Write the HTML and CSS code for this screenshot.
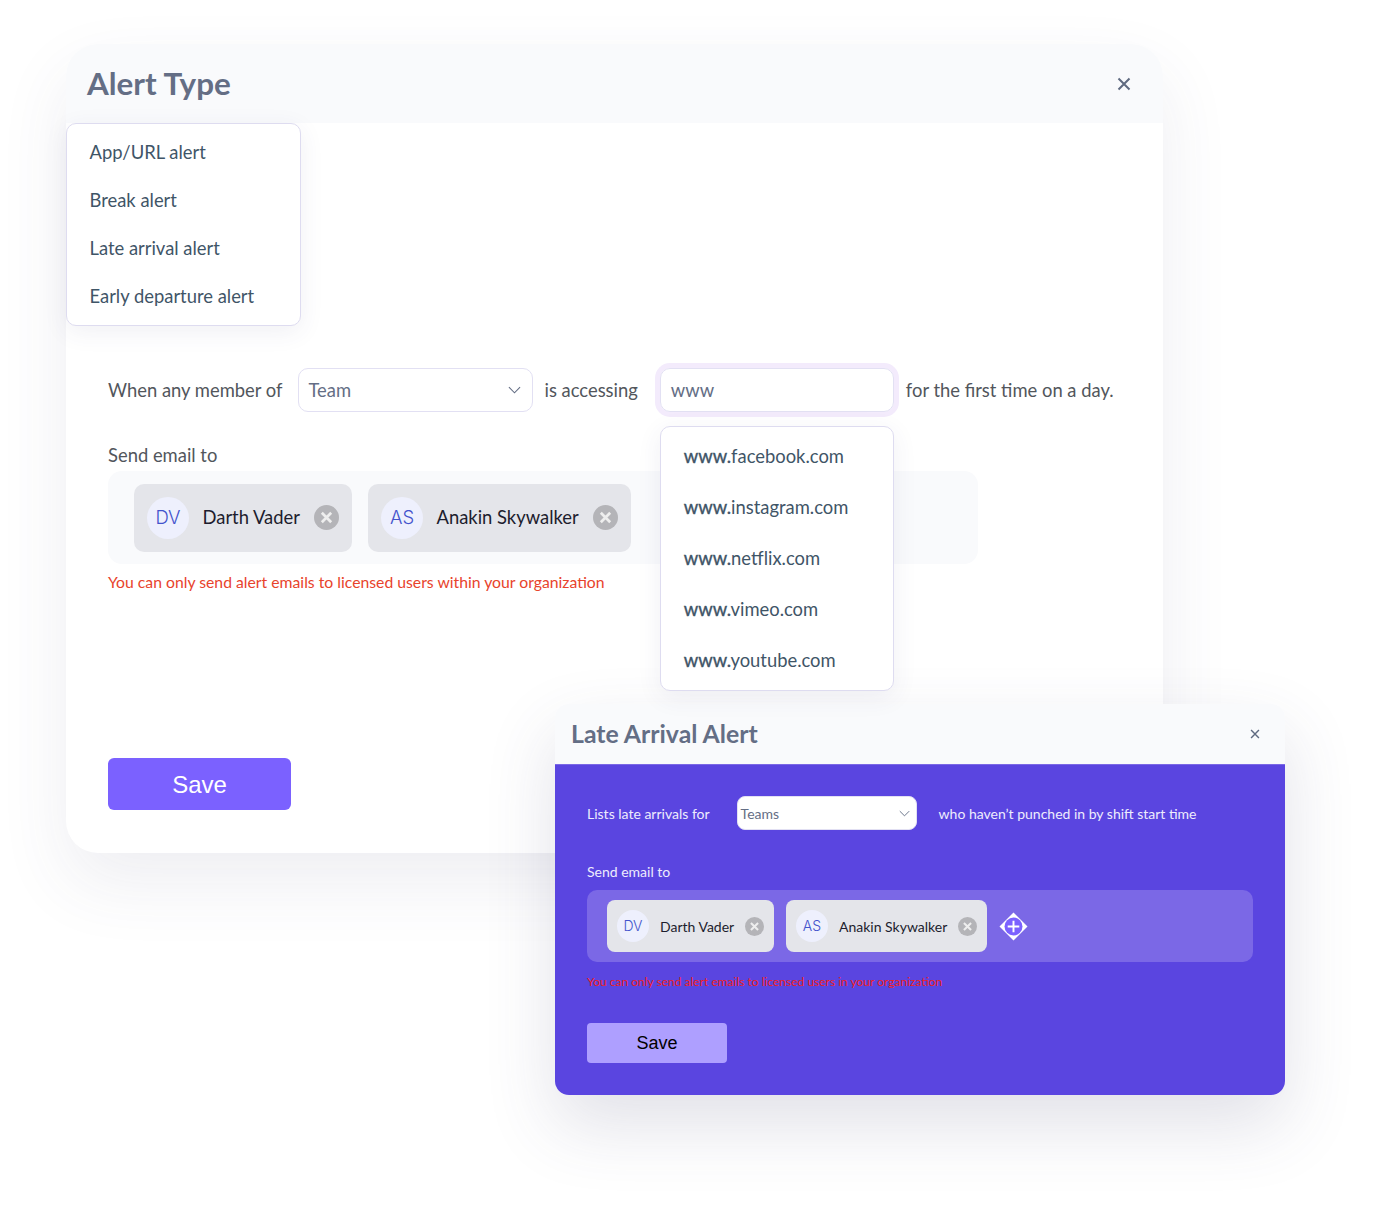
FILE: index.html
```html
<!doctype html>
<html lang="en">
    <head>
        <meta charset="UTF-8">
        <meta name="viewport" content="width=device-width, initial-scale=1.0">
        <title>Alert Type</title>
        <link rel="stylesheet" href="styles.css">
    </head>
    <body>
        <div class="canvas">
            <section class="window window-main">
                <header class="window-header">
                    <h2>Alert Type</h2>
                    <svg class="close" viewBox="0 0 14 14"><path d="M1.5 1.5l11 11M12.5 1.5l-11 11"/></svg>
                </header>
                <ul class="menu type-menu">
                    <li>App/URL alert</li>
                    <li>Break alert</li>
                    <li>Late arrival alert</li>
                    <li>Early departure alert</li>
                </ul>
                <div class="window-body">
                    <div class="rule-row">
                        <span>When any member of</span>
                        <div class="select">
                            <span>Team</span>
                            <svg class="chevron" viewBox="0 0 14 8"><path d="M1 1l6 6 6-6"/></svg>
                        </div>
                        <span>is accessing</span>
                        <div class="url-field">
                            <div class="url-input">www</div>
                            <ul class="menu url-menu">
                                <li><b>www.</b>facebook.com</li>
                                <li><b>www.</b>instagram.com</li>
                                <li><b>www.</b>netflix.com</li>
                                <li><b>www.</b>vimeo.com</li>
                                <li><b>www.</b>youtube.com</li>
                            </ul>
                        </div>
                        <span>for the first time on a day.</span>
                    </div>
                    <div class="field-label">Send email to</div>
                    <div class="chip-box">
                        <div class="chip">
                            <span class="avatar">DV</span>
                            <span class="chip-name">Darth Vader</span>
                            <svg class="chip-remove" viewBox="0 0 24 24"><circle cx="12" cy="12" r="12"/><path d="M7.5 7.5l9 9M16.5 7.5l-9 9"/></svg>
                        </div>
                        <div class="chip">
                            <span class="avatar">AS</span>
                            <span class="chip-name">Anakin Skywalker</span>
                            <svg class="chip-remove" viewBox="0 0 24 24"><circle cx="12" cy="12" r="12"/><path d="M7.5 7.5l9 9M16.5 7.5l-9 9"/></svg>
                        </div>
                    </div>
                    <p class="error">You can only send alert emails to licensed users within your organization</p>
                    <button class="save">Save</button>
                </div>
            </section>

            <section class="window window-late">
                <header class="window-header">
                    <h2>Late Arrival Alert</h2>
                    <svg class="close" viewBox="0 0 14 14"><path d="M1.5 1.5l11 11M12.5 1.5l-11 11"/></svg>
                </header>
                <div class="window-body">
                    <div class="rule-row">
                        <span>Lists late arrivals for</span>
                        <div class="select">
                            <span>Teams</span>
                            <svg class="chevron" viewBox="0 0 14 8"><path d="M1 1l6 6 6-6"/></svg>
                        </div>
                        <span>who haven’t punched in by shift start time</span>
                    </div>
                    <div class="field-label">Send email to</div>
                    <div class="chip-box">
                        <div class="chip">
                            <span class="avatar">DV</span>
                            <span class="chip-name">Darth Vader</span>
                            <svg class="chip-remove" viewBox="0 0 24 24"><circle cx="12" cy="12" r="12"/><path d="M7.5 7.5l9 9M16.5 7.5l-9 9"/></svg>
                        </div>
                        <div class="chip">
                            <span class="avatar">AS</span>
                            <span class="chip-name">Anakin Skywalker</span>
                            <svg class="chip-remove" viewBox="0 0 24 24"><circle cx="12" cy="12" r="12"/><path d="M7.5 7.5l9 9M16.5 7.5l-9 9"/></svg>
                        </div>
                        <svg class="chip-add" viewBox="0 0 30 30">
                            <path class="add-diamond" d="M15 .5L29.5 15 15 29.5.5 15z"/>
                            <circle class="add-circle" cx="15" cy="15" r="9.3"/>
                            <path class="add-plus" d="M15 9v12M9 15h12"/>
                        </svg>
                    </div>
                    <p class="error">You can only send alert emails to licensed users in your organization</p>
                    <button class="save">Save</button>
                </div>
            </section>
        </div>
    </body>
</html>
```

FILE: styles.css
```css
* {
    box-sizing: border-box;
}
html {
    background-color: #fff;
}
body {
    margin: 0;
    font-family: "Lato", sans-serif;
    color: #52565c;
}
.canvas {
    position: relative;
    width: 1395px;
    height: 1228px;
    overflow: hidden;
}
.window {
    position: absolute;
    display: flex;
    flex-direction: column;
    background-color: #fff;
}
.window-header {
    display: flex;
    justify-content: space-between;
    align-items: center;
    flex: none;
    background-color: #f9fafc;
}
.window-header h2 {
    margin: 0;
    font-weight: 700;
    color: #646e85;
}
.close {
    fill: none;
    stroke: #5f6a80;
    stroke-width: 2;
}
.menu {
    position: absolute;
    margin: 0;
    padding: 0;
    list-style: none;
    background-color: #fff;
    border: 1px solid #dedcf0;
    border-radius: 10px;
    box-shadow: 0 6px 24px rgba(70, 70, 120, 0.08);
    color: #3f5567;
    font-size: 18.4px;
}
.select {
    display: flex;
    justify-content: space-between;
    align-items: center;
    background-color: #fff;
    border: 1px solid #e2e0f3;
    color: #646e85;
}
.chevron {
    fill: none;
    stroke: #646e85;
    stroke-width: 1.2;
}
.rule-row {
    display: flex;
    align-items: center;
}
.chip-box {
    display: flex;
    align-items: center;
}
.chip {
    display: flex;
    align-items: center;
    background-color: #e4e5ea;
    color: #1d1d2e;
}
.avatar {
    display: flex;
    justify-content: center;
    align-items: center;
    flex: none;
    padding-bottom: 2px;
    border-radius: 50%;
    background-color: #eef0fd;
    color: #4353cc;
    font-family: "Inter", sans-serif;
    font-weight: 300;
}
.chip-name {
    flex: 1;
    white-space: nowrap;
}
.chip-remove {
    flex: none;
    fill: #b4b4b8;
}
.chip-remove path {
    fill: none;
    stroke: #eeeeee;
    stroke-width: 2.6;
}
.error {
    margin: 0;
}
.save {
    display: block;
    padding: 0;
    border: none;
    font-family: "Liberation Sans", sans-serif;
}

/* grande fenetre */
.window-main {
    left: 66px;
    top: 44px;
    width: 1097px;
    height: 809px;
    border-radius: 32px;
    box-shadow: 0 30px 70px rgba(70, 70, 110, 0.09);
}
.window-main .window-header {
    height: 79px;
    padding: 0 32px 0 21px;
    border-radius: 32px 32px 0 0;
}
.window-main h2 {
    padding-bottom: 2px;
    font-size: 31.4px;
}
.window-main .close {
    width: 14px;
    height: 14px;
}
.type-menu {
    left: 0;
    top: 79px;
    width: 235px;
    height: 203px;
    padding: 4px 0 0 22.5px;
}
.type-menu li {
    height: 48px;
    line-height: 48px;
}
.window-main .window-body {
    padding: 245px 0 0 42px;
    font-size: 18.4px;
}
.window-main .rule-row {
    height: 44px;
}
.window-main .select {
    width: 235px;
    height: 44px;
    margin: 0 11px 0 16px;
    padding: 0 11px 0 9px;
    border-radius: 10px;
}
.window-main .chevron {
    width: 13px;
    height: 8px;
}
.url-field {
    position: relative;
    margin: 0 12px 0 22px;
}
.url-input {
    width: 234px;
    height: 44px;
    padding: 0 10px;
    border: 1px solid #e2e0f3;
    border-radius: 10px;
    box-shadow: 0 0 0 5px #f3ebfc;
    color: #646e85;
    line-height: 42px;
}
.url-menu {
    left: 0;
    top: 58px;
    width: 234px;
    height: 265px;
    padding: 4px 0 0 23px;
    z-index: 1;
}
.url-menu li {
    height: 51px;
    line-height: 51px;
}
.url-menu b {
    font-weight: 400;
    -webkit-text-stroke: 0.35px #3f5567;
}
.window-main .field-label {
    margin-top: 33px;
    height: 26px;
    line-height: 20px;
}
.window-main .chip-box {
    gap: 16px;
    width: 870px;
    height: 93px;
    padding-left: 26px;
    border-radius: 14px;
    background-color: #f9fafc;
}
.window-main .chip {
    height: 68px;
    padding: 0 13.5px 0 13px;
    border-radius: 10px;
}
.window-main .chip-name {
    padding-bottom: 2px;
}
.window-main .chip:first-child {
    width: 218px;
}
.window-main .chip:nth-child(2) {
    width: 263px;
}
.window-main .avatar {
    width: 42px;
    height: 42px;
    margin-right: 13.5px;
    font-size: 18.5px;
}
.window-main .chip-remove {
    width: 25px;
    height: 25px;
}
.window-main .error {
    margin-top: 8px;
    font-size: 15.75px;
    line-height: 20px;
    color: #e8432c;
}
.window-main .save {
    width: 183px;
    height: 52px;
    margin-top: 166px;
    padding-top: 2px;
    border-radius: 6px;
    background-color: #7b61ff;
    color: #fff;
    font-size: 24px;
}

/* petite fenetre */
.window-late {
    left: 555px;
    top: 704px;
    width: 730px;
    height: 391px;
    border-radius: 14px;
    background-color: transparent;
    box-shadow: 0 30px 70px rgba(70, 70, 110, 0.16);
}
.window-late .window-header {
    height: 61px;
    padding: 0 25px 1px 16px;
    border-bottom: 1px solid #7b68e6;
    border-radius: 14px 14px 0 0;
}
.window-late h2 {
    font-size: 24.8px;
}
.window-late .close {
    width: 10px;
    height: 10px;
}
.window-late .window-body {
    flex: 1;
    padding: 31px 0 0 32px;
    border-radius: 0 0 14px 14px;
    background-color: #5a45e0;
    font-size: 14px;
    color: #eeecfd;
}
.window-late .rule-row {
    height: 34px;
}
.window-late .select {
    width: 180px;
    height: 34px;
    margin: 0 22px 0 27px;
    padding: 0 6px 0 3px;
    border-radius: 8px;
}
.window-late .chevron {
    width: 11px;
    height: 7px;
}
.window-late .field-label {
    margin-top: 32px;
    height: 28px;
    line-height: 20px;
}
.window-late .chip-box {
    gap: 12px;
    width: 666px;
    height: 72px;
    padding-left: 20px;
    border-radius: 10px;
    background-color: #7b68e6;
}
.window-late .chip {
    height: 52px;
    padding: 0 10px;
    border-radius: 8px;
}
.window-late .chip:first-child {
    width: 167px;
}
.window-late .chip:nth-child(2) {
    width: 201px;
}
.window-late .avatar {
    width: 32px;
    height: 32px;
    margin-right: 11px;
    font-size: 14px;
}
.window-late .chip-remove {
    width: 19px;
    height: 19px;
}
.chip-add {
    width: 29px;
    height: 29px;
}
.add-diamond {
    fill: #fff;
}
.add-circle {
    fill: #7b61ff;
}
.add-plus {
    fill: none;
    stroke: #fff;
    stroke-width: 2;
}
.window-late .error {
    margin-top: 12px;
    font-size: 12px;
    line-height: 16px;
    color: #f0201c;
}
.window-late .save {
    width: 140px;
    height: 40px;
    margin-top: 33px;
    border-radius: 4px;
    background-color: #ae9fff;
    color: #000;
    font-size: 18px;
}
```
